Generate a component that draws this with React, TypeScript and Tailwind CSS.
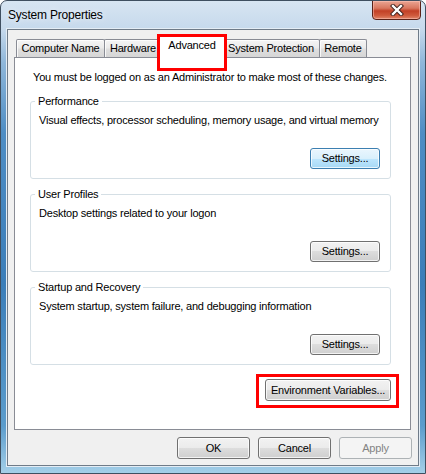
import React from "react";

const font = "font-['Liberation_Sans',Arial,sans-serif]";

function Btn({
  children,
  w,
  h = "h-[22px]",
  variant = "normal",
}: {
  children: React.ReactNode;
  w: string;
  h?: string;
  variant?: "normal" | "default" | "disabled";
}) {
  const base =
    "flex items-center justify-center rounded-[3px] border text-[11px] tracking-[-0.2px] leading-[15px] shadow-[inset_0_0_0_1px_rgba(255,255,255,0.75)]";
  const styles =
    variant === "default"
      ? "border-[#3c7fb1] bg-[linear-gradient(180deg,#eaf6fd_0%,#d9f0fc_50%,#bee6fd_50%,#a7d9f5_100%)] text-black"
      : variant === "disabled"
      ? "border-[#adb2b5] bg-[#f4f4f4] text-[#838383] shadow-none"
      : "border-[#707070] bg-[linear-gradient(180deg,#f2f2f2_0%,#ebebeb_50%,#dddddd_50%,#cfcfcf_100%)] text-black";
  return <div className={`${base} ${styles} ${w} ${h}`}>{children}</div>;
}

function Group({
  title,
  desc,
  variant = "normal",
}: {
  title: string;
  desc: string;
  variant?: "normal" | "default";
}) {
  return (
    <fieldset className="ml-[15px] mr-[19px] rounded-[3px] border border-[#d5dfe5]">
      <legend className="ml-[4px] px-[3px] leading-[15px]">{title}</legend>
      <div className="pl-[8px] pr-[10px] pb-[9px]">
        <p className="mt-[4px] leading-[15px]">{desc}</p>
        <div className="mt-[20px] flex justify-end">
          <Btn w="w-[70px]" h="h-[21px]" variant={variant}>
            Settings...
          </Btn>
        </div>
      </div>
    </fieldset>
  );
}

function Tab({ label, w, extra = "" }: { label: string; w: string; extra?: string }) {
  return (
    <div
      className={`${w} ${extra} h-[18px] flex items-center justify-center border-t border-l border-r border-[#898c95] rounded-t-[2px] bg-[linear-gradient(180deg,#f5f5f5_0%,#ebebeb_45%,#dedede_55%,#d6d6d6_100%)] shadow-[inset_1px_1px_0_0_rgba(255,255,255,0.8)] leading-[15px] whitespace-nowrap`}
    >
      {label}
    </div>
  );
}

export default function App() {
  return (
    <div
      className={`${font} relative w-[426px] h-[474px] flex flex-col border border-[#3f4f60] rounded-t-[7px] overflow-hidden bg-[linear-gradient(180deg,#d7e5f2_0%,#c6d9ec_6%,#8fb7da_13%,#4e8dc4_28%,#3b7eb9_60%,#5b9ccc_90%,#a4cfe8_100%)] text-[11px] tracking-[-0.2px] text-black`}
    >
      {/* Title bar */}
      <div className="h-[27px] flex items-start shrink-0">
        <div className="pl-[7px] pt-[6px] text-[12px] leading-[16px] text-black [text-shadow:0_0_6px_rgba(255,255,255,0.9)]">
          System Properties
        </div>
        <div className="ml-auto mr-[4px] -mt-px w-[49px] h-[20px] rounded-b-[4px] border border-[#5a2218] bg-[linear-gradient(180deg,#eaa593_0%,#d8775f_40%,#c24026_55%,#cf5a3c_80%,#e0876a_100%)] shadow-[inset_0_0_0_1px_rgba(255,200,190,0.5)] flex items-center justify-center">
          <svg width="14" height="12" viewBox="0 0 14 12">
            <path d="M3 2 L11 10 M11 2 L3 10" stroke="#3b1e1a" strokeWidth="4.2" strokeLinecap="square" />
            <path d="M3 2 L11 10 M11 2 L3 10" stroke="#ffffff" strokeWidth="2.4" strokeLinecap="square" />
          </svg>
        </div>
      </div>

      {/* Client area */}
      <div className="flex-1 mx-[5px] mb-[6px] border border-[#e4edf5] flex flex-col">
        <div className="flex-1 border border-[#6f7b88] bg-[#f0f0f0] flex flex-col">
          {/* Tabs */}
          <div className="mt-[5px] ml-[8px] h-[22px] flex items-end relative z-10">
            <Tab label="Computer Name" w="w-[89px]" />
            <Tab label="Hardware" w="w-[58px]" extra="-ml-px" />
            <div className="-ml-[3px] w-[66px] h-[23px] -mb-px border-t border-l border-r border-[#898c95] rounded-t-[2px] bg-white flex justify-center pt-[2px] leading-[15px] relative z-10">
              Advanced
            </div>
            <Tab label="System Protection" w="w-[98px]" extra="-ml-[3px]" />
            <Tab label="Remote" w="w-[48px]" extra="-ml-px" />
          </div>

          {/* Panel */}
          <div className="ml-[6px] mr-[7px] border border-[#898c95] bg-white pt-[12px] pb-[28px]">
            <p className="ml-[18px] leading-[15px]">
              You must be logged on as an Administrator to make most of these changes.
            </p>
            <div className="mt-[9px]">
              <Group
                title="Performance"
                desc="Visual effects, processor scheduling, memory usage, and virtual memory"
                variant="default"
              />
            </div>
            <div className="mt-[8px]">
              <Group title="User Profiles" desc="Desktop settings related to your logon" />
            </div>
            <div className="mt-[8px]">
              <Group
                title="Startup and Recovery"
                desc="System startup, system failure, and debugging information"
              />
            </div>
            <div className="mt-[14px] mr-[19px] flex justify-end">
              <Btn w="w-[126px]" h="h-[22px]">
                Environment Variables...
              </Btn>
            </div>
          </div>

          {/* Bottom buttons */}
          <div className="mt-[7px] mr-[6px] flex justify-end gap-[8px]">
            <Btn w="w-[73px]">OK</Btn>
            <Btn w="w-[73px]">Cancel</Btn>
            <Btn w="w-[73px]" variant="disabled">
              Apply
            </Btn>
          </div>
        </div>
      </div>

      {/* Red annotation boxes */}
      <div className="absolute left-[156px] top-[33px] w-[70px] h-[37px] border-[3px] border-[#ff0000] z-20 pointer-events-none" />
      <div className="absolute left-[255px] top-[373px] w-[143px] h-[34px] border-[3px] border-[#ff0000] z-20 pointer-events-none" />
    </div>
  );
}
